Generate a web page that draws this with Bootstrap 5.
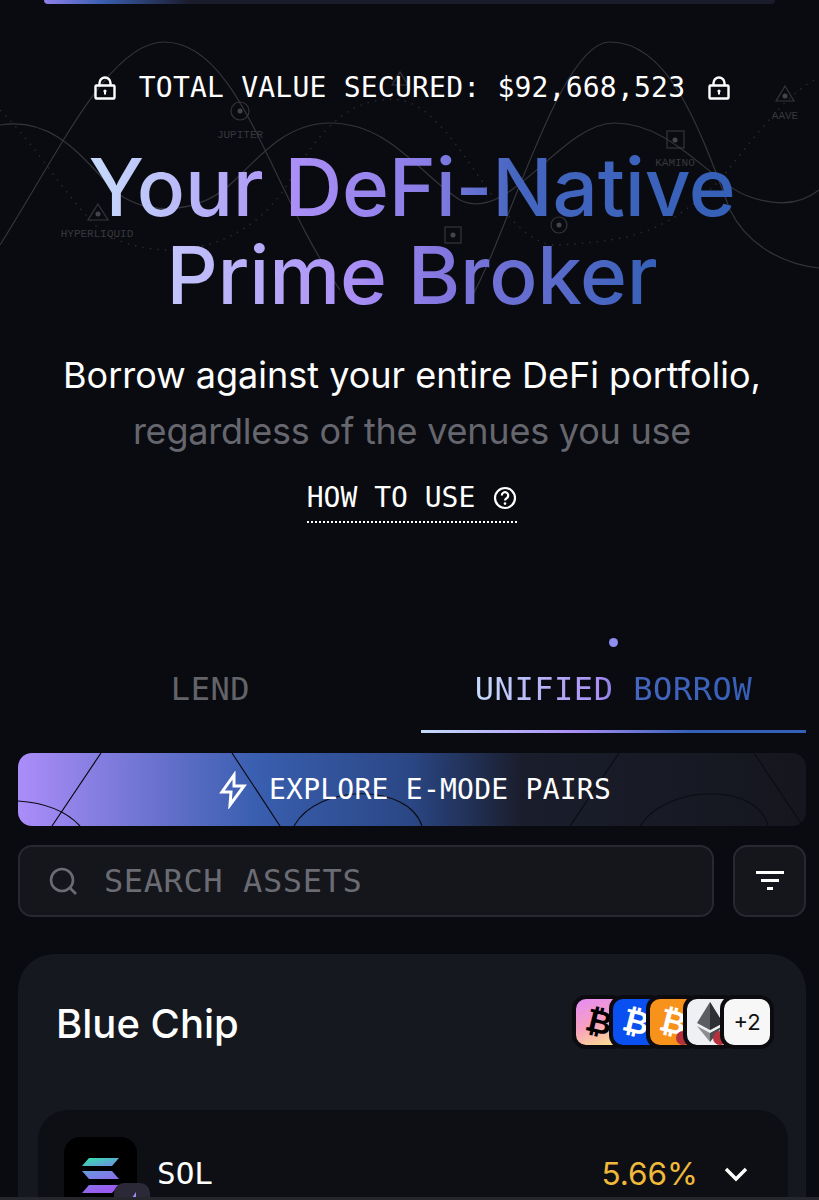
<!DOCTYPE html>
<html lang="en">
<head>
<meta charset="UTF-8">
<meta name="viewport" content="width=device-width, initial-scale=1">
<title>DeFi-Native Prime Broker</title>
<link href="https://cdn.jsdelivr.net/npm/bootstrap@5.3.0/dist/css/bootstrap.min.css" rel="stylesheet">
<style>
body { background: #0a0b10; color: #fff; font-family: "Inter", sans-serif; height: 1200px; overflow: hidden; }
.mono { font-family: "DejaVu Sans Mono", "Liberation Mono", monospace; }
.top-strip { height: 4px; margin: 0 44px; border-radius: 0 0 8px 8px; background: linear-gradient(90deg, #8f80ea 0, #3a5fb0 8%, #1a1b2b 20%, #1a1b2b 100%); }
.hero { height: 596px; padding-left: 5px; }
.hero-bg { position: absolute; left: 0; top: -4px; width: 819px; height: 300px; }
.hero-bg text { font-family: "Liberation Mono", monospace; font-size: 11px; fill: #37383d; text-anchor: middle; }
.tvl-wrap { padding-top: 66px; height: 139px; position: relative; }
.tvl-line { gap: 22px; font-size: 28px; line-height: 36px; letter-spacing: .22px; }
.headline { margin: 0; font-size: 80px; line-height: 88px; font-weight: 550; letter-spacing: -.25px; position: relative; }
.headline span { display: block; width: fit-content; margin: 0 auto; -webkit-background-clip: text; background-clip: text; color: transparent; }
.line-one { background-image: linear-gradient(90deg, #c6dcfb 0, #aa8ff6 32%, #8a7de6 52%, #4566c0 66%, #3560b8 100%); }
.line-two { background-image: linear-gradient(90deg, #c4c6fc 0, #aa8ff6 38%, #8577e0 55%, #3560b8 100%); }
.sub-one { font-size: 36px; line-height: 56px; margin: 28px 0 0; position: relative; }
.sub-two { font-size: 36px; line-height: 56px; margin: 0; color: #66676e; letter-spacing: -.22px; position: relative; }
.how-link { font-size: 28px; line-height: 36px; color: #fff; text-decoration: none; gap: 18px; border-bottom: 2px dotted #fff; padding-bottom: 5px; margin-top: 21px; }
.tab-row { height: 133px; position: relative; }
.tab-dot { position: absolute; left: 609px; top: 38px; width: 9px; height: 9px; border-radius: 50%; background: #8f8ff0; }
.tab-item { font-size: 32px; line-height: 40px; letter-spacing: .55px; height: 133px; padding-top: 69px; }
.tab-lend { width: 421px; color: #63646a; }
.tab-borrow { width: 385px; position: relative; }
.tab-borrow i { position: absolute; left: 0; right: 0; bottom: 0; height: 3px; background: linear-gradient(90deg, #c6dcfb 0, #aa8ff6 40%, #3560b8 70%, #3560b8 100%); }
.tab-borrow b { font-weight: 400; background-image: linear-gradient(90deg, #c6dcfb 0, #aa8ff6 45%, #4566c0 58%, #3560b8 100%); -webkit-background-clip: text; background-clip: text; color: transparent; }
.emode { height: 73px; margin: 20px 13px 0 18px; padding-left: 6px; border-radius: 14px; background: linear-gradient(90deg, #ab8df9 0, #3a5fb0 30%, #2a4684 50%, #1a1d2c 64%, #15161e 100%); font-size: 28px; letter-spacing: .25px; gap: 22px; overflow: hidden; position: relative; }
.emode svg.lines { position: absolute; left: 0; top: 0; }
.emode > span, .emode > svg.bolt { position: relative; }
.search-row { margin: 19px 13px 0 18px; gap: 19px; }
.search-box { height: 72px; flex: 1; background: #14161c; border: 2px solid #272930; border-radius: 14px; color: #6b6c73; font-size: 32px; letter-spacing: .6px; padding-left: 28px; gap: 26px; }
.filter-btn { width: 73px; height: 72px; background: #14161c; border: 2px solid #272930; border-radius: 14px; }
.panel { margin: 37px 13px 0 18px; background: #161820; border-radius: 36px 36px 0 0; height: 300px; padding: 0 18px 0 20px; }
.panel-head { height: 156px; padding: 0 14px 0 18px; }
.panel-title { font-size: 40px; font-weight: 500; line-height: 1; margin: 0; position: relative; top: -8px; }
.coin-stack { position: relative; top: -10px; }
.coin-tile { width: 54px; height: 54px; border: 4px solid #0b0b10; border-radius: 14px; margin-left: -17px; flex: none; overflow: hidden; position: relative; }
.coin-tile:first-child { margin-left: 0; }
.coin-glyph { font: 700 32px "Liberation Sans", sans-serif; transform: rotate(14deg); color: #fff; }
.tile-a { background: linear-gradient(160deg, #e58cf5 0, #f8a0c0 50%, #fde68a 100%); }
.tile-a .coin-glyph { color: #000; }
.tile-b { background: #0a50f0; }
.tile-c { background: #f7931a; }
.tile-d { background: #eef0f3; }
.tile-e { background: #f7f7f8; color: #111; font-size: 22px; }
.net-dot { position: absolute; left: 26px; top: 32px; width: 14px; height: 14px; border-radius: 50%; background: #b5303a; }
.asset-row { background: #0e0f14; border-radius: 30px 30px 0 0; height: 120px; padding: 27px 38px 0 26px; }
.sol-logo { width: 73px; height: 73px; background: #000; border-radius: 16px; position: relative; flex: none; }
.chain-badge { position: absolute; left: 50px; top: 46px; width: 36px; height: 36px; background: #2b2938; border-radius: 10px; }
.asset-name { font-size: 31px; margin-left: 20px; line-height: 1; }
.asset-rate { font-size: 31.5px; color: #f0b93a; line-height: 1; }
.bottom-edge { position: fixed; left: 0; right: 0; top: 1197px; height: 3px; background: #26272c; }
</style>
</head>
<body>

<div class="top-strip"></div>

<section class="hero position-relative text-center">
  <svg class="hero-bg" viewBox="0 0 819 300" fill="none">
    <g stroke="#34353b" stroke-width="1.2">
      <path d="M0 245C60 150 110 42 164 42C240 42 270 190 340 290"/>
      <path d="M0 125C60 115 90 170 120 195C150 215 200 215 235 180C265 150 290 123 330 123C390 123 420 175 460 200C510 225 560 123 615 123C670 123 710 180 745 195C775 207 800 205 819 190"/>
      <path d="M470 300C510 230 560 42 610 42C670 42 700 130 730 210C750 250 790 265 819 268"/>
    </g>
    <g stroke="#2a2b31" stroke-width="1.4" stroke-dasharray="1.5 6">
      <path d="M0 110C40 150 60 190 100 230C140 260 240 265 290 180C320 130 350 95 400 100C460 110 500 250 560 245C620 240 660 240 720 180C760 130 790 90 819 78"/>
    </g>
    <g stroke="#34353b" stroke-width="1.2">
      <circle cx="240" cy="111" r="9"/><path d="M98 204l10 16H88z"/><rect x="667" y="131" width="17" height="17"/>
      <path d="M785 86l9 15H776z"/><path d="M400 72l8 13H392z"/><rect x="445" y="227" width="16" height="16"/><circle cx="559" cy="225" r="8"/>
    </g>
    <g fill="#44454b"><circle cx="240" cy="111" r="2.5"/><circle cx="98" cy="214" r="2.5"/><circle cx="675" cy="140" r="2.5"/><circle cx="785" cy="96" r="2.5"/><circle cx="453" cy="235" r="2.5"/><circle cx="559" cy="225" r="2.5"/></g>
    <text x="240" y="138">JUPITER</text><text x="97" y="237">HYPERLIQUID</text><text x="675" y="166">KAMINO</text><text x="785" y="119">AAVE</text>
  </svg>
  <div class="tvl-wrap">
    <div class="tvl-line mono d-flex justify-content-center align-items-center">
      <svg width="24" height="24" viewBox="0 0 24 24" fill="none" stroke="#fff" stroke-width="2.4"><rect x="2.5" y="9.5" width="19" height="13" rx="1"/><path d="M6.5 9.5V7a5.5 5.5 0 0 1 11 0v2.5"/><circle cx="12" cy="15" r="1.6" fill="#fff" stroke="none"/><path d="M12 15v3.5" stroke-width="2"/></svg>
      <span>TOTAL VALUE SECURED: $92,668,523</span>
      <svg width="24" height="24" viewBox="0 0 24 24" fill="none" stroke="#fff" stroke-width="2.4"><rect x="2.5" y="9.5" width="19" height="13" rx="1"/><path d="M6.5 9.5V7a5.5 5.5 0 0 1 11 0v2.5"/><circle cx="12" cy="15" r="1.6" fill="#fff" stroke="none"/><path d="M12 15v3.5" stroke-width="2"/></svg>
    </div>
  </div>
  <h1 class="headline"><span class="line-one">Your DeFi-Native</span><span class="line-two">Prime Broker</span></h1>
  <p class="sub-one">Borrow against your entire DeFi portfolio,</p>
  <p class="sub-two">regardless of the venues you use</p>
  <a href="#" class="how-link mono d-inline-flex align-items-center">HOW TO USE
    <svg width="24" height="24" viewBox="0 0 24 24" fill="none" stroke="#fff" stroke-width="2.2"><circle cx="12" cy="12" r="10"/><path d="M8.8 9.4a3.2 3.2 0 1 1 4.8 2.8c-1 .6-1.6 1.1-1.6 2.2"/><circle cx="12" cy="17.6" r="1.3" fill="#fff" stroke="none"/></svg>
  </a>
</section>

<div class="tab-row d-flex mono">
  <span class="tab-dot"></span>
  <div class="tab-item tab-lend text-center">LEND</div>
  <div class="tab-item tab-borrow text-center"><b>UNIFIED BORROW</b><i></i></div>
</div>

<div class="emode mono d-flex justify-content-center align-items-center">
  <svg class="lines" width="788" height="73" viewBox="0 0 788 73" fill="none" stroke="#0c0d14" stroke-width="1.2">
    <path d="M83 0L34 73M214 0L262 73M601 0L552 73M736 0L785 73"/>
    <path d="M0 48C30 50 50 60 62 73M276 73C300 30 390 30 404 73M622 73C650 30 740 30 750 73"/>
  </svg>
  <svg class="bolt" width="28" height="38" viewBox="0 0 28 38" fill="none" stroke="#fff" stroke-width="3" stroke-linejoin="miter"><path d="M15 4L3 21h9l-1 13 14-19h-10z"/></svg>
  <span>EXPLORE E-MODE PAIRS</span>
</div>

<div class="search-row d-flex">
  <div class="search-box mono d-flex align-items-center">
    <svg width="30" height="30" viewBox="0 0 30 30" fill="none" stroke="#6b6c73" stroke-width="2.6"><circle cx="14" cy="14" r="11"/><path d="M22 22l6 6"/></svg>
    <span>SEARCH ASSETS</span>
  </div>
  <div class="filter-btn d-flex justify-content-center align-items-center">
    <svg width="28" height="20" viewBox="0 0 28 20" fill="#fff"><rect width="28" height="3"/><rect x="5" y="8" width="18" height="3"/><rect x="11" y="16" width="6" height="3"/></svg>
  </div>
</div>

<div class="panel">
  <div class="panel-head d-flex justify-content-between align-items-center">
    <h2 class="panel-title">Blue Chip</h2>
    <div class="coin-stack d-flex">
      <div class="coin-tile tile-a d-flex justify-content-center align-items-center"><span class="coin-glyph">₿</span></div>
      <div class="coin-tile tile-b d-flex justify-content-center align-items-center"><span class="coin-glyph">₿</span></div>
      <div class="coin-tile tile-c d-flex justify-content-center align-items-center"><span class="coin-glyph">₿</span><span class="net-dot"></span></div>
      <div class="coin-tile tile-d d-flex justify-content-center align-items-center">
        <svg width="26" height="40" viewBox="0 0 26 40"><path d="M13 0L0 21l13 7 13-7z" fill="#5b5d62"/><path d="M13 0v28l13-7z" fill="#2f3034"/><path d="M0 24l13 16V31z" fill="#8b8d91"/><path d="M26 24L13 40V31z" fill="#4a4b50"/></svg>
        <span class="net-dot"></span>
      </div>
      <div class="coin-tile tile-e d-flex justify-content-center align-items-center">+2</div>
    </div>
  </div>
  <div class="asset-row">
    <div class="d-flex align-items-center">
      <div class="sol-logo d-flex justify-content-center align-items-center">
        <svg class="mt-1" width="37" height="35" viewBox="0 0 37 35">
          <defs><linearGradient id="solg" x1="0" y1="0" x2=".3" y2="1"><stop offset="0" stop-color="#2fe6a8"/><stop offset=".45" stop-color="#6f8fe0"/><stop offset="1" stop-color="#9a5cf0"/></linearGradient></defs>
          <path d="M7 0H37L30 8H0zM0 13H30L37 21H7zM7 27H37L30 35H0z" fill="url(#solg)"/>
        </svg>
        <div class="chain-badge d-flex justify-content-center align-items-center">
          <svg width="16" height="18" viewBox="0 0 16 18"><path d="M12 0v18H0z" fill="#a78bfa"/></svg>
        </div>
      </div>
      <span class="asset-name mono">SOL</span>
      <span class="asset-rate ms-auto">5.66%</span>
      <svg class="ms-4" width="28" height="28" viewBox="0 0 28 28" fill="none" stroke="#fff" stroke-width="3.4"><path d="M4 9l10 10L24 9"/></svg>
    </div>
  </div>
</div>
<div class="bottom-edge"></div>

<script src="https://cdn.jsdelivr.net/npm/bootstrap@5.3.0/dist/js/bootstrap.bundle.min.js"></script>
</body>
</html>
